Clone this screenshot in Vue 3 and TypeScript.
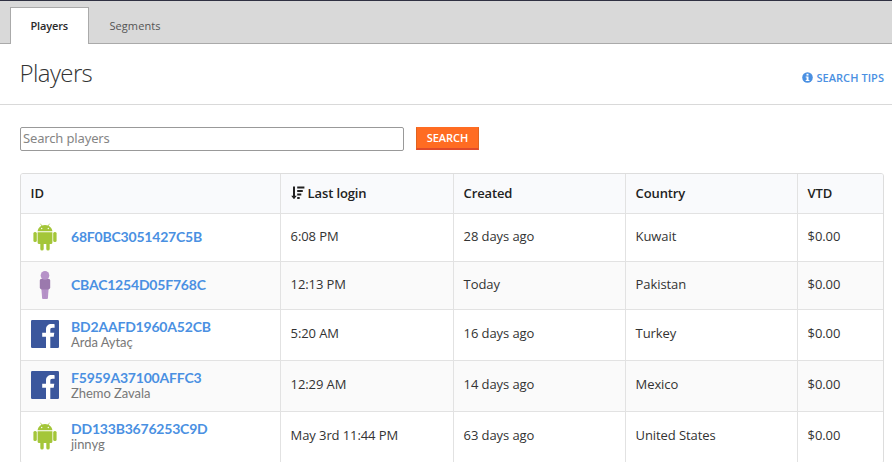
<script setup lang="ts">
interface Player {
  id: string
  name?: string
  icon: 'android' | 'person' | 'facebook'
  login: string
  created: string
  country: string
  vtd: string
}

const players: Player[] = [
  { id: '68F0BC3051427C5B', icon: 'android', login: '6:08 PM', created: '28 days ago', country: 'Kuwait', vtd: '$0.00' },
  { id: 'CBAC1254D05F768C', icon: 'person', login: '12:13 PM', created: 'Today', country: 'Pakistan', vtd: '$0.00' },
  { id: 'BD2AAFD1960A52CB', name: 'Arda Aytaç', icon: 'facebook', login: '5:20 AM', created: '16 days ago', country: 'Turkey', vtd: '$0.00' },
  { id: 'F5959A37100AFFC3', name: 'Zhemo Zavala', icon: 'facebook', login: '12:29 AM', created: '14 days ago', country: 'Mexico', vtd: '$0.00' },
  { id: 'DD133B3676253C9D', name: 'jinnyg', icon: 'android', login: 'May 3rd 11:44 PM', created: '63 days ago', country: 'United States', vtd: '$0.00' },
]
</script>

<template>
  <div class="page">
    <nav class="tabs">
      <a class="tab active">Players</a>
      <a class="tab">Segments</a>
    </nav>
    <header class="heading">
      <h1>Players</h1>
      <a class="tips">
        <svg width="11" height="11" viewBox="0 0 11 11">
          <circle cx="5.5" cy="5.5" r="5.3" fill="#4a90e2" />
          <path d="M4.5 1.8h2v1.6h-2zM3.7 4.4h2.8v3.5h.9v1.2H3.7V7.9h.9V5.6h-.9z" fill="#fff" />
        </svg>
        <span>SEARCH TIPS</span>
      </a>
    </header>
    <form class="search" @submit.prevent>
      <input type="text" placeholder="Search players" />
      <button type="submit">SEARCH</button>
    </form>
    <section class="table">
      <div class="row head">
        <div class="cell">ID</div>
        <div class="cell">
          <svg class="sort" width="14" height="14" viewBox="0 0 14 14" fill="#222">
            <path d="M2 0.5h2v9.2h1.8L3 13.3 0.2 9.7H2zM6.2 0.5h7.2v2H6.2zM6.2 4h5.6v2H6.2zM6.2 7.5h4.1v2H6.2zM6.2 11h2.5v2H6.2z" />
          </svg>
          <span>Last login</span>
        </div>
        <div class="cell">Created</div>
        <div class="cell">Country</div>
        <div class="cell">VTD</div>
      </div>
      <div v-for="p in players" :key="p.id" class="row" :class="{ tall: p.name }">
        <div class="cell player">
          <svg v-if="p.icon === 'android'" width="28" height="28" viewBox="0 0 28 28" fill="#a4c639">
            <path d="M6.6 8.3C6.8 5.5 9.6 2.1 14 2.1s7.2 3.4 7.4 6.2z" />
            <path d="M9.6 1l1.6 2.4M18.4 1l-1.6 2.4" stroke="#a4c639" stroke-width=".7" stroke-linecap="round" />
            <circle cx="10.7" cy="5.5" r=".7" fill="#fff" />
            <circle cx="17.3" cy="5.5" r=".7" fill="#fff" />
            <path d="M6.6 9.2h14.8v10.4a1.5 1.5 0 0 1-1.5 1.5h-1.2v4.8a1.7 1.7 0 0 1-3.4 0v-4.8h-2.6v4.8a1.7 1.7 0 0 1-3.4 0v-4.8H8.1a1.5 1.5 0 0 1-1.5-1.5z" />
            <rect x="2.4" y="9" width="3.4" height="10" rx="1.5" />
            <rect x="22.2" y="9" width="3.4" height="10" rx="1.5" />
          </svg>
          <svg v-else-if="p.icon === 'person'" width="28" height="28" viewBox="0 0 28 28">
            <path d="M10.4 17.5h7.2L16.9 27.2q-.1.8-.9.8h-4q-.8 0-.9-.8z" fill="#b692c8" />
            <path d="M13.8 19h.4v8h-.4z" fill="#a885bb" />
            <rect x="8.8" y="7.8" width="10.4" height="10.6" rx="1.8" fill="#9b79ad" />
            <circle cx="14" cy="4.4" r="4.3" fill="#b692c8" />
          </svg>
          <svg v-else width="28" height="28" viewBox="0 0 28 28">
            <rect width="28" height="28" rx="1.2" fill="#3b579d" />
            <path d="M15 28V16.8h-3.8v-4.1H15V9.5c0-3.6 2.2-5.5 5.5-5.5 1.5 0 2.5.1 3.1.2v3.6h-2.1c-1.8 0-2.2.9-2.2 2.2v2.7h4l-.6 4.1h-3.4V28z" fill="#fff" />
          </svg>
          <div class="identity">
            <a class="id">{{ p.id }}</a>
            <span v-if="p.name" class="name">{{ p.name }}</span>
          </div>
        </div>
        <div class="cell">{{ p.login }}</div>
        <div class="cell">{{ p.created }}</div>
        <div class="cell">{{ p.country }}</div>
        <div class="cell">{{ p.vtd }}</div>
      </div>
    </section>
  </div>
</template>

<style>
body {
  margin: 0;
  background: #fff;
  overflow: hidden;
}
</style>

<style scoped>
.page {
  box-sizing: border-box;
  height: 462px;
  overflow: hidden;
  border-top: 1px solid #2f3142;
  font-family: 'Open Sans', 'Noto Sans', sans-serif;
  font-size: 13px;
  color: #333;
}
.tabs {
  display: flex;
  align-items: flex-end;
  box-sizing: border-box;
  height: 43px;
  padding-left: 10px;
  background: #d9d9d9;
  border-bottom: 1px solid #aaa;
}
.tab {
  box-sizing: border-box;
  height: 36px;
  padding: 0 20px 0 20.4px;
  line-height: 37px;
  font-size: 11px;
  color: #555;
  letter-spacing: 0.1px;
}
.tab.active {
  width: 79px;
  height: 37px;
  margin-bottom: -1px;
  padding: 0 19px 0 19.4px;
  border: 1px solid #aaa;
  border-bottom: 0;
  line-height: 35px;
  background: #fff;
  color: #2a2a2a;
  font-weight: 600;
  letter-spacing: -0.12px;
}
.heading {
  display: flex;
  justify-content: space-between;
  box-sizing: border-box;
  height: 61px;
  padding: 0 8px 0 19.5px;
  border-bottom: 1px solid #d9d9d9;
}
h1 {
  margin: 0;
  font-size: 24px;
  line-height: 58px;
  font-weight: 300;
  letter-spacing: -0.6px;
}
.tips {
  display: flex;
  align-items: center;
  gap: 3px;
  padding-top: 6px;
  font-size: 11px;
  font-weight: 600;
  letter-spacing: 0.06px;
  color: #4a90e2;
}
.search {
  display: flex;
  gap: 12px;
  margin: 22px 20px 22px;
}
.search input {
  box-sizing: border-box;
  width: 384px;
  height: 24px;
  padding: 0 2px 2px;
  border: 1px solid #999;
  border-radius: 2px;
  font: 13px 'Noto Sans', sans-serif;
  letter-spacing: -0.15px;
}
.search input::placeholder {
  color: #858585;
}
.search button {
  box-sizing: border-box;
  width: 63px;
  height: 23px;
  padding: 0 0 1px;
  border: 1px solid #e0631f;
  border-top-color: #ff6c22;
  border-bottom: 2px solid #e04a2a;
  background: #ff6c22;
  color: #fff;
  font: 600 11px 'Open Sans', sans-serif;
}
.table {
  box-sizing: border-box;
  width: 864px;
  margin-left: 20px;
  border: 1px solid #ddd;
  border-radius: 3px;
  overflow: hidden;
}
.row {
  display: grid;
  grid-template-columns: 260px 173px 172px 172px 85px;
  height: 47px;
  border-bottom: 1px solid #e2e2e2;
}
.row.tall {
  height: 50px;
}
.row:nth-child(odd) {
  background: #fafafa;
}
.row.head {
  height: 39px;
  background: #f9fafc;
  color: #222;
  font-weight: 600;
}
.cell {
  display: flex;
  align-items: center;
  gap: 3px;
  padding: 0 0 3px 9.6px;
  border-right: 1px solid #e2e2e2;
  line-height: 18px;
  letter-spacing: -0.09px;
}
.tall .cell {
  padding-bottom: 4px;
}
.head .cell {
  padding-bottom: 2px;
  letter-spacing: -0.13px;
}
.cell:last-child {
  border-right: 0;
}
.cell.player {
  gap: 12px;
  padding: 0 0 1px 10px;
}
.player svg {
  flex: none;
}
.tall .cell.player {
  padding-bottom: 2px;
}
.identity {
  display: flex;
  flex-direction: column;
  padding-bottom: 2px;
  font-family: Lato, sans-serif;
}
.tall .identity {
  padding-bottom: 0;
}
.id {
  color: #4a90e2;
  font-size: 14px;
  font-weight: 700;
  line-height: 15px;
  letter-spacing: -0.2px;
}
.name {
  color: #777;
  font-size: 13px;
  line-height: 16px;
  letter-spacing: -0.05px;
}
</style>
